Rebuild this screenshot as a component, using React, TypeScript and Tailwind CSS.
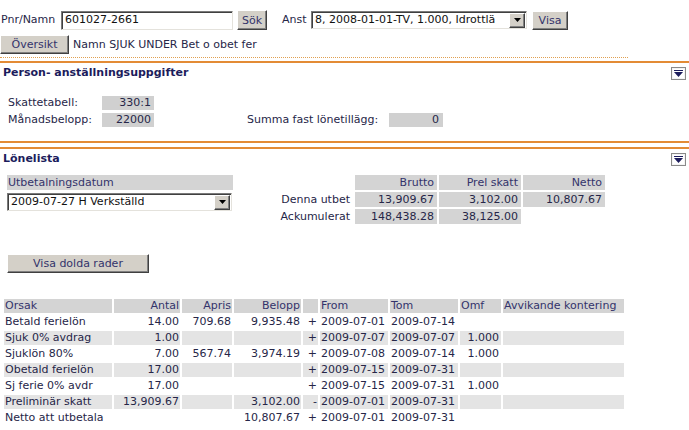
import type { ReactNode } from 'react'

const sunken =
  'border border-t-[#7a7a7a] border-l-[#7a7a7a] border-b-[#e4e2dc] border-r-[#e4e2dc] shadow-[inset_1px_1px_0_#404040] bg-white'
const raised =
  'bg-[#d4d0c8] border border-t-white border-l-white border-b-[#404040] border-r-[#404040] shadow-[inset_-1px_-1px_0_#808080] text-[#33336b]'

function Btn({ w, children }: { w: string; children: ReactNode }) {
  return <div className={`${raised} ${w} h-[19px] flex items-center justify-center leading-none`}>{children}</div>
}

function ComboArrow() {
  return (
    <div className={`${raised} w-[16px] h-[15px] mr-[1px] flex items-center justify-center shrink-0`}>
      <svg width="7" height="4" viewBox="0 0 7 4">
        <path d="M0 0h7L3.5 4z" fill="#000" />
      </svg>
    </div>
  )
}

function Select({ w, text }: { w: string; text: string }) {
  return (
    <div className={`${sunken} ${w} h-[18px] flex items-center justify-between`}>
      <span className="pl-[3px] whitespace-nowrap overflow-hidden text-[#111]">{text}</span>
      <ComboArrow />
    </div>
  )
}

function CollapseIcon() {
  return (
    <svg width="15" height="13" viewBox="0 0 15 13" className="shrink-0">
      <rect x="0.5" y="0.5" width="14" height="12" fill="#f4f4f4" stroke="#8a8a8a" />
      <rect x="2" y="2" width="11" height="9" fill="#fff" />
      <rect x="3" y="3" width="9" height="1" fill="#1c1c5c" />
      <path d="M3 5h9l-4.5 5z" fill="#1c1c5c" />
    </svg>
  )
}

const lines = [
  { orsak: 'Betald ferielön', antal: '14.00', apris: '709.68', belopp: '9,935.48', sign: '+', from: '2009-07-01', tom: '2009-07-14', omf: '' },
  { orsak: 'Sjuk 0% avdrag', antal: '1.00', apris: '', belopp: '', sign: '+', from: '2009-07-07', tom: '2009-07-07', omf: '1.000' },
  { orsak: 'Sjuklön 80%', antal: '7.00', apris: '567.74', belopp: '3,974.19', sign: '+', from: '2009-07-08', tom: '2009-07-14', omf: '1.000' },
  { orsak: 'Obetald ferielön', antal: '17.00', apris: '', belopp: '', sign: '+', from: '2009-07-15', tom: '2009-07-31', omf: '' },
  { orsak: 'Sj ferie 0% avdr', antal: '17.00', apris: '', belopp: '', sign: '+', from: '2009-07-15', tom: '2009-07-31', omf: '1.000' },
  { orsak: 'Preliminär skatt', antal: '13,909.67', apris: '', belopp: '3,102.00', sign: '-', from: '2009-07-01', tom: '2009-07-31', omf: '' },
  { orsak: 'Netto att utbetala', antal: '', apris: '', belopp: '10,807.67', sign: '+', from: '2009-07-01', tom: '2009-07-31', omf: '' },
]

export default function App() {
  const th = 'bg-[#d4d4d4] text-[#33336b] font-normal h-[14px] p-0 leading-[14px]'
  return (
    <div className="w-[689px] h-[430px] overflow-hidden bg-white font-['DejaVu_Sans',Verdana,sans-serif] text-[11px] leading-[14px] text-[#262648]">
      {/* search row */}
      <div className="flex items-center mt-[10px] h-[20px]">
        <span className="w-[61px] pl-[1px]">Pnr/Namn</span>
        <div className={`${sunken} w-[172px] h-[19px] flex items-center pl-[3px] text-[#111]`}>601027-2661</div>
        <div className="ml-[4px]">
          <Btn w="w-[30px] h-[20px]">Sök</Btn>
        </div>
        <span className="ml-[15px] w-[29px]">Anst</span>
        <Select w="w-[216px]" text="8, 2008-01-01-TV, 1.000, Idrottlä" />
        <div className="ml-[5px]">
          <Btn w="w-[36px]">Visa</Btn>
        </div>
      </div>
      <div className="flex items-center mt-[5px] h-[19px]">
        <Btn w="w-[69px]">Översikt</Btn>
        <span className="ml-[4px]">Namn SJUK UNDER Bet o obet fer</span>
      </div>
      <div className="mt-[3px] w-[628px] border-t border-dotted border-[#e0a050]" />

      {/* person */}
      <div className="mt-[3px] border-t-2 border-b-2 border-[#e38b35] pb-[14px]">
        <div className="flex items-center justify-between h-[18px] pl-[3px] pr-[3px] pt-[2px]">
          <span className="font-bold text-[#1c1c5c]">Person- anställningsuppgifter</span>
          <CollapseIcon />
        </div>
        <div className="mt-[15px] flex flex-col gap-[2px]">
          <div className="flex items-center h-[14px]">
            <span className="pl-[8px] w-[102px]">Skattetabell:</span>
            <span className="w-[52px] bg-[#d0d0d0] text-right pr-[3px]">330:1</span>
          </div>
          <div className="flex items-center h-[15px]">
            <span className="pl-[8px] w-[102px]">Månadsbelopp:</span>
            <span className="w-[52px] bg-[#d0d0d0] text-right pr-[3px]">22000</span>
            <span className="ml-[93px] w-[142px]">Summa fast lönetillägg:</span>
            <span className="w-[54px] bg-[#d0d0d0] text-right pr-[4px]">0</span>
          </div>
        </div>
      </div>

      {/* lönelista */}
      <div className="mt-[4px] border-t-2 border-[#e38b35]">
        <div className="flex items-center justify-between h-[18px] pl-[3px] pr-[3px] pt-[2px]">
          <span className="font-bold text-[#1c1c5c]">Lönelista</span>
          <CollapseIcon />
        </div>
        <div className="flex items-start mt-[6px]">
          <div className="ml-[7px] mt-[2px] w-[226px]">
            <div className="bg-[#d4d4d4] text-[#33336b] h-[15px] leading-[15px] pl-[1px]">Utbetalningsdatum</div>
            <div className="mt-[3px]">
              <Select w="w-[225px]" text="2009-07-27 H Verkställd" />
            </div>
          </div>
          <table className="ml-[43px] border-separate border-spacing-[2px]">
            <tbody>
              <tr>
                <td className="w-[75px] h-[15px] p-0" />
                <td className={`${th} w-[82px] text-right pr-[3px]`}>Brutto</td>
                <td className={`${th} w-[82px] text-right pr-[3px]`}>Prel skatt</td>
                <td className={`${th} w-[82px] text-right pr-[3px]`}>Netto</td>
              </tr>
              <tr>
                <td className="text-right pr-[3px] p-0 h-[15px]">Denna utbet</td>
                <td className="bg-[#d4d4d4] text-right pr-[3px] p-0">13,909.67</td>
                <td className="bg-[#d4d4d4] text-right pr-[3px] p-0">3,102.00</td>
                <td className="bg-[#d4d4d4] text-right pr-[3px] p-0">10,807.67</td>
              </tr>
              <tr>
                <td className="text-right pr-[3px] p-0 h-[15px]">Ackumulerat</td>
                <td className="bg-[#d4d4d4] text-right pr-[3px] p-0">148,438.28</td>
                <td className="bg-[#d4d4d4] text-right pr-[3px] p-0">38,125.00</td>
                <td className="p-0" />
              </tr>
            </tbody>
          </table>
        </div>
        <div className="ml-[7px] mt-[28px]">
          <Btn w="w-[142px]">Visa dolda rader</Btn>
        </div>
        <table className="mt-[24px] ml-[2px] border-separate border-spacing-[2px] table-fixed">
          <thead>
            <tr>
              <th className={`${th} w-[108px] text-left pl-[1px]`}>Orsak</th>
              <th className={`${th} w-[66px] text-right pr-[1px]`}>Antal</th>
              <th className={`${th} w-[50px] text-right pr-[1px]`}>Apris</th>
              <th className={`${th} w-[67px] text-right pr-[1px]`}>Belopp</th>
              <th className={`${th} w-[15px]`} />
              <th className={`${th} w-[68px] text-left pl-[1px]`}>From</th>
              <th className={`${th} w-[68px] text-left pl-[1px]`}>Tom</th>
              <th className={`${th} w-[41px] text-left pl-[1px]`}>Omf</th>
              <th className={`${th} w-[121px] text-left pl-[1px]`}>Avvikande kontering</th>
            </tr>
          </thead>
          <tbody>
            {lines.map((r, i) => {
              const bg = i % 2 === 1 ? 'bg-[#e4e4e4]' : ''
              const td = `${bg} h-[14px] p-0 leading-[14px] whitespace-nowrap`
              return (
                <tr key={r.orsak}>
                  <td className={`${td} pl-[1px]`}>{r.orsak}</td>
                  <td className={`${td} text-right pr-[1px]`}>{r.antal}</td>
                  <td className={`${td} text-right pr-[1px]`}>{r.apris}</td>
                  <td className={`${td} text-right pr-[1px]`}>{r.belopp}</td>
                  <td className={`${td} text-right pr-[1px]`}>{r.sign}</td>
                  <td className={`${td} pl-[1px]`}>{r.from}</td>
                  <td className={`${td} pl-[1px]`}>{r.tom}</td>
                  <td className={`${td} text-right pr-[2px]`}>{r.omf}</td>
                  <td className={td} />
                </tr>
              )
            })}
          </tbody>
        </table>
      </div>
    </div>
  )
}
